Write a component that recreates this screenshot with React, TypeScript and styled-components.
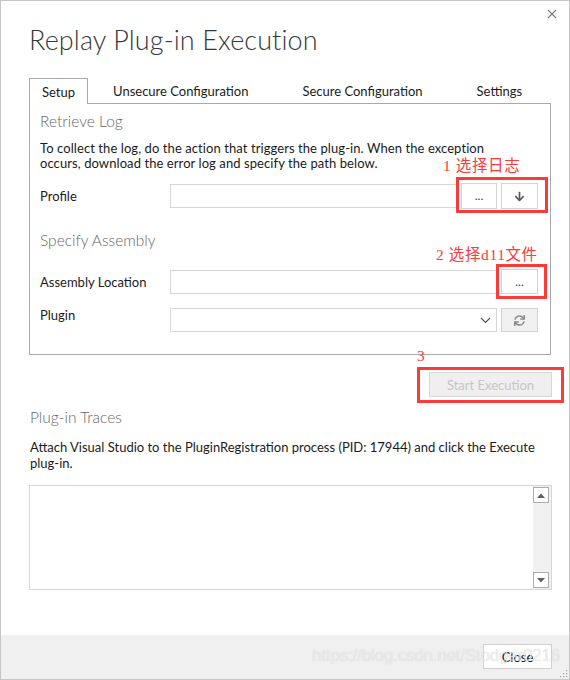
import React from "react";
import styled, { createGlobalStyle } from "styled-components";
import { FaArrowDown, FaSync } from "react-icons/fa";

const Global = createGlobalStyle`
  html, body { margin: 0; padding: 0; background: #ffffff; }
  body { width: 570px; height: 680px; overflow: hidden; }
  * { box-sizing: border-box; }
`;

const UI_FONT = `Lato, "Noto Sans", "Liberation Sans", sans-serif`;
const NOTE_FONT = `"Liberation Serif", "Noto Sans CJK SC", serif`;
const RED = "#fb3a3a";

const Window = styled.div`
  position: relative;
  width: 570px;
  height: 680px;
  border: 1px solid #c6c6c6;
  background: #ffffff;
  display: flex;
  flex-direction: column;
  font-family: ${UI_FONT};
  font-size: 13px;
  color: #1b1b1b;
`;

const CloseX = styled.button`
  position: absolute;
  top: 4px;
  right: 9px;
  width: 16px;
  height: 18px;
  padding: 0;
  border: none;
  background: transparent;
  color: #7a7a7a;
  display: flex;
  align-items: center;
  justify-content: center;
`;

const Body = styled.div`
  flex: 1;
  padding: 23px 18px 0 28px;
  display: flex;
  flex-direction: column;
`;

const Title = styled.h1`
  margin: 0;
  font-family: ${UI_FONT};
  font-weight: 300;
  font-size: 27px;
  line-height: 32px;
  color: #383838;
  letter-spacing: 0.1px;
`;

const Tabs = styled.div`
  margin-top: 22px;
  display: flex;
  height: 25px;
  align-items: stretch;
`;

const Tab = styled.div<{ $active?: boolean }>`
  display: flex;
  align-items: center;
  padding: ${(p) => (p.$active ? "0 12px 0 12px" : "0 28px 0 24px")};
  border: ${(p) => (p.$active ? "1px solid #a9a9a9" : "1px solid transparent")};
  border-bottom: none;
  background: #ffffff;
  margin-bottom: ${(p) => (p.$active ? "-1px" : "0")};
  position: relative;
  z-index: 1;
  color: #1b1b1b;
  white-space: nowrap;
`;

const Panel = styled.div`
  border: 1px solid #a9a9a9;
  height: 252px;
  padding: 0 12px 0 10px;
  display: flex;
  flex-direction: column;
`;

const SectionHeading = styled.div<{ $mt: number }>`
  margin-top: ${(p) => p.$mt}px;
  font-size: 15.5px;
  line-height: 20px;
  font-weight: 300;
  color: #666666;
`;

const Para = styled.p<{ $mt: number; $lh: number }>`
  margin: ${(p) => p.$mt}px 0 0 0;
  line-height: ${(p) => p.$lh}px;
  color: #1b1b1b;
  padding-right: 40px;
  letter-spacing: 0.08px;
`;

const Row = styled.div<{ $mt: number; $top?: boolean }>`
  margin-top: ${(p) => p.$mt}px;
  display: flex;
  align-items: ${(p) => (p.$top ? "flex-start" : "center")};
  gap: 4px;
`;

const Label = styled.div<{ $pt?: number }>`
  width: 126px;
  flex: none;
  padding-top: ${(p) => p.$pt ?? 0}px;
  line-height: 14px;
`;

const TextBox = styled.div<{ $h: number }>`
  flex: 1;
  height: ${(p) => p.$h}px;
  border: 1px solid #d6d6d6;
  background: #ffffff;
`;

const SelectBox = styled.div`
  flex: 1;
  height: 24px;
  border: 1px solid #d6d6d6;
  background: #ffffff;
  display: flex;
  align-items: center;
  justify-content: flex-end;
  padding-right: 5px;
`;

const ButtonGroup = styled.div`
  position: relative;
  display: flex;
  gap: 4px;
`;

const SmallButton = styled.button<{ $disabled?: boolean; $h: number }>`
  width: 37px;
  height: ${(p) => p.$h}px;
  padding: 0;
  border: 1px solid #d3d3d3;
  background: ${(p) => (p.$disabled ? "#f0f0f0" : "#ffffff")};
  color: #3a3a3a;
  font-family: ${UI_FONT};
  font-size: 12px;
  display: flex;
  align-items: center;
  justify-content: center;
  line-height: 1;
`;

const RedBox = styled.div<{ $t: number; $r: number; $b: number; $l: number }>`
  position: absolute;
  top: ${(p) => p.$t}px;
  right: ${(p) => p.$r}px;
  bottom: ${(p) => p.$b}px;
  left: ${(p) => p.$l}px;
  border: 3px solid ${RED};
  pointer-events: none;
`;

const Note = styled.div<{ $t: number; $l: number }>`
  position: absolute;
  top: ${(p) => p.$t}px;
  left: ${(p) => p.$l}px;
  font-family: ${NOTE_FONT};
  font-size: 15.5px;
  line-height: 16px;
  color: ${RED};
  white-space: nowrap;
  letter-spacing: 0.6px;
`;

const ActionRow = styled.div`
  margin-top: 17px;
  display: flex;
  justify-content: flex-end;
  margin-right: -1px;
`;

const ActionWrap = styled.div`
  position: relative;
`;

const StartButton = styled.button`
  width: 123px;
  height: 25px;
  border: 1px solid #d8d8d8;
  background: #efefef;
  color: #c6c6c6;
  font-family: ${UI_FONT};
  font-size: 13px;
  padding: 0;
`;

const TraceHeading = styled(SectionHeading)`
  padding-left: 1px;
`;

const TracePara = styled(Para)`
  padding-left: 1px;
  padding-right: 0;
  letter-spacing: 0;
`;

const TraceBox = styled.div`
  margin-top: 14px;
  margin-right: -1px;
  height: 105px;
  border: 1px solid #d6d6d6;
  display: flex;
  justify-content: flex-end;
`;

const ScrollTrack = styled.div`
  width: 18px;
  background: #f1f1f1;
  display: flex;
  flex-direction: column;
  justify-content: space-between;
  padding: 1px 1px 1px 0;
`;

const ScrollBtn = styled.div`
  width: 16px;
  height: 16px;
  border: 1px solid #acacac;
  background: #ffffff;
  display: flex;
  align-items: center;
  justify-content: center;
`;

const Footer = styled.div`
  position: relative;
  height: 44px;
  background: #f0f0f0;
  display: flex;
  justify-content: flex-end;
  align-items: flex-start;
  padding: 9px 17px 0 0;
`;

const CloseButton = styled.button`
  width: 69px;
  height: 25px;
  border: 1px solid #cfcfcf;
  background: #ffffff;
  color: #111111;
  font-family: ${UI_FONT};
  font-size: 13px;
  padding: 0;
`;

const Watermark = styled.div`
  position: absolute;
  right: 9px;
  top: 11px;
  font-family: "Liberation Sans", Arial, sans-serif;
  font-size: 16.8px;
  color: rgba(255, 255, 255, 0.55);
  text-shadow: 0 0 1px rgba(170, 170, 170, 0.55);
  white-space: nowrap;
  pointer-events: none;
  letter-spacing: -0.1px;
`;

const Grip = styled.svg`
  position: absolute;
  right: 1px;
  bottom: 1px;
`;

const Chevron = () => (
  <svg width="11" height="7" viewBox="0 0 11 7">
    <polyline points="1,1 5.5,5.5 10,1" fill="none" stroke="#555" strokeWidth="1.2" />
  </svg>
);

const Tri = ({ up }: { up?: boolean }) => (
  <svg width="8" height="5" viewBox="0 0 8 5">
    <polygon points={up ? "0,5 4,0.5 8,5" : "0,0 8,0 4,4.5"} fill="#606060" />
  </svg>
);

export default function App() {
  return (
    <>
      <Global />
      <Window>
        <CloseX aria-label="close">
          <svg width="10" height="10" viewBox="0 0 10 10">
            <path d="M1 1 L9 9 M9 1 L1 9" stroke="#7a7a7a" strokeWidth="1.1" />
          </svg>
        </CloseX>
        <Body>
          <Title>Replay Plug-in Execution</Title>
          <Tabs>
            <Tab $active>Setup</Tab>
            <Tab>Unsecure Configuration</Tab>
            <Tab>Secure Configuration</Tab>
            <Tab>Settings</Tab>
          </Tabs>
          <Panel>
            <SectionHeading $mt={7}>Retrieve Log</SectionHeading>
            <Para $mt={10} $lh={15}>
              To collect the log, do the action that triggers the plug-in. When the exception
              occurs, download the error log and specify the path below.
            </Para>
            <Row $mt={12}>
              <Label>Profile</Label>
              <TextBox $h={24} />
              <ButtonGroup>
                <SmallButton $h={26} style={{ width: 36 }}>...</SmallButton>
                <SmallButton $h={26}>
                  <FaArrowDown size={11} color="#5a5a5a" />
                </SmallButton>
                <RedBox $t={-6} $r={-10} $b={-4} $l={-5} />
                <Note $t={-25} $l={-18}>1 选择日志</Note>
              </ButtonGroup>
            </Row>
            <SectionHeading $mt={21}>Specify Assembly</SectionHeading>
            <Row $mt={19}>
              <Label>Assembly Location</Label>
              <TextBox $h={24} />
              <ButtonGroup>
                <SmallButton $h={25}>...</SmallButton>
                <RedBox $t={-5} $r={-9} $b={-5} $l={-5} />
                <Note $t={-22} $l={-65}>2 选择d11文件</Note>
              </ButtonGroup>
            </Row>
            <Row $mt={14} $top>
              <Label $pt={0}>Plugin</Label>
              <SelectBox>
                <Chevron />
              </SelectBox>
              <SmallButton $h={24} $disabled>
                <FaSync size={11} color="#8a8a8a" />
              </SmallButton>
            </Row>
          </Panel>
          <ActionRow>
            <ActionWrap>
              <StartButton disabled>Start Execution</StartButton>
              <RedBox $t={-5} $r={-12} $b={-6} $l={-12} />
              <Note $t={-24} $l={-12}>3</Note>
            </ActionWrap>
          </ActionRow>
          <TraceHeading $mt={10}>Plug-in Traces</TraceHeading>
          <TracePara $mt={12} $lh={16}>
            Attach Visual Studio to the PluginRegistration process (PID: 17944) and click the Execute
            plug-in.
          </TracePara>
          <TraceBox>
            <ScrollTrack>
              <ScrollBtn>
                <Tri up />
              </ScrollBtn>
              <ScrollBtn>
                <Tri />
              </ScrollBtn>
            </ScrollTrack>
          </TraceBox>
        </Body>
        <Footer>
          <CloseButton>Close</CloseButton>
          <Watermark>https://blog.csdn.net/Stodger0216</Watermark>
          <Grip width="10" height="10" viewBox="0 0 10 10">
            {[
              [8, 2], [8, 5], [5, 5], [8, 8], [5, 8], [2, 8],
            ].map(([x, y], i) => (
              <rect key={i} x={x} y={y} width="1.2" height="1.2" fill="#a0a0a0" />
            ))}
          </Grip>
        </Footer>
      </Window>
    </>
  );
}
